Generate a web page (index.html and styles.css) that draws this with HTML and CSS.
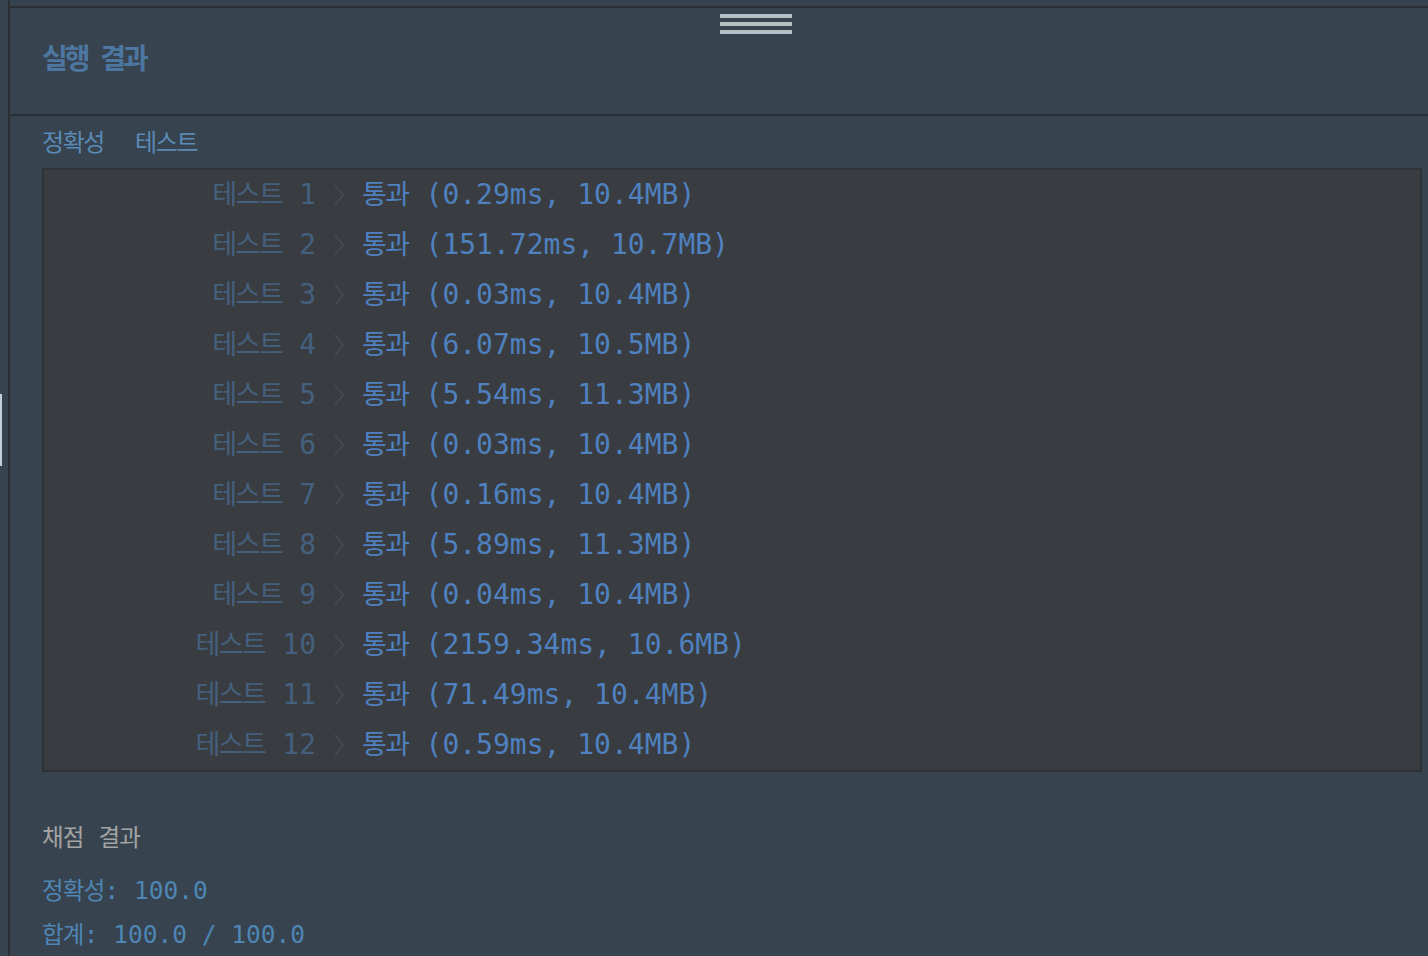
FILE: index.html
```html
<!DOCTYPE html>
<html lang="ko">
<head>
<meta charset="utf-8">
<title>실행 결과</title>
<link rel="stylesheet" href="styles.css">
</head>
<body>
<div class="app">
  <div class="rail"><div class="rail-grip"></div></div>
  <div class="vline"></div>
  <main class="main">
    <div class="topbar"></div>
    <div class="handle"><span></span><span></span><span></span></div>
    <header class="header"><h1 class="title">실행 결과</h1></header>
    <nav class="tabs"><span class="tab">정확성</span><span class="tab">테스트</span></nav>
    <section class="results">
      <div class="row"><div class="label"><span class="ko">테스트</span> 1</div><div class="chev"><svg width="12" height="22" viewBox="0 0 12 22"><polyline points="2,1 10,11 2,21" fill="none" stroke="#444c55" stroke-width="1.5"/></svg></div><div class="res"><span class="ko">통과</span> (0.29ms, 10.4MB)</div></div>
      <div class="row"><div class="label"><span class="ko">테스트</span> 2</div><div class="chev"><svg width="12" height="22" viewBox="0 0 12 22"><polyline points="2,1 10,11 2,21" fill="none" stroke="#444c55" stroke-width="1.5"/></svg></div><div class="res"><span class="ko">통과</span> (151.72ms, 10.7MB)</div></div>
      <div class="row"><div class="label"><span class="ko">테스트</span> 3</div><div class="chev"><svg width="12" height="22" viewBox="0 0 12 22"><polyline points="2,1 10,11 2,21" fill="none" stroke="#444c55" stroke-width="1.5"/></svg></div><div class="res"><span class="ko">통과</span> (0.03ms, 10.4MB)</div></div>
      <div class="row"><div class="label"><span class="ko">테스트</span> 4</div><div class="chev"><svg width="12" height="22" viewBox="0 0 12 22"><polyline points="2,1 10,11 2,21" fill="none" stroke="#444c55" stroke-width="1.5"/></svg></div><div class="res"><span class="ko">통과</span> (6.07ms, 10.5MB)</div></div>
      <div class="row"><div class="label"><span class="ko">테스트</span> 5</div><div class="chev"><svg width="12" height="22" viewBox="0 0 12 22"><polyline points="2,1 10,11 2,21" fill="none" stroke="#444c55" stroke-width="1.5"/></svg></div><div class="res"><span class="ko">통과</span> (5.54ms, 11.3MB)</div></div>
      <div class="row"><div class="label"><span class="ko">테스트</span> 6</div><div class="chev"><svg width="12" height="22" viewBox="0 0 12 22"><polyline points="2,1 10,11 2,21" fill="none" stroke="#444c55" stroke-width="1.5"/></svg></div><div class="res"><span class="ko">통과</span> (0.03ms, 10.4MB)</div></div>
      <div class="row"><div class="label"><span class="ko">테스트</span> 7</div><div class="chev"><svg width="12" height="22" viewBox="0 0 12 22"><polyline points="2,1 10,11 2,21" fill="none" stroke="#444c55" stroke-width="1.5"/></svg></div><div class="res"><span class="ko">통과</span> (0.16ms, 10.4MB)</div></div>
      <div class="row"><div class="label"><span class="ko">테스트</span> 8</div><div class="chev"><svg width="12" height="22" viewBox="0 0 12 22"><polyline points="2,1 10,11 2,21" fill="none" stroke="#444c55" stroke-width="1.5"/></svg></div><div class="res"><span class="ko">통과</span> (5.89ms, 11.3MB)</div></div>
      <div class="row"><div class="label"><span class="ko">테스트</span> 9</div><div class="chev"><svg width="12" height="22" viewBox="0 0 12 22"><polyline points="2,1 10,11 2,21" fill="none" stroke="#444c55" stroke-width="1.5"/></svg></div><div class="res"><span class="ko">통과</span> (0.04ms, 10.4MB)</div></div>
      <div class="row"><div class="label"><span class="ko">테스트</span> 10</div><div class="chev"><svg width="12" height="22" viewBox="0 0 12 22"><polyline points="2,1 10,11 2,21" fill="none" stroke="#444c55" stroke-width="1.5"/></svg></div><div class="res"><span class="ko">통과</span> (2159.34ms, 10.6MB)</div></div>
      <div class="row"><div class="label"><span class="ko">테스트</span> 11</div><div class="chev"><svg width="12" height="22" viewBox="0 0 12 22"><polyline points="2,1 10,11 2,21" fill="none" stroke="#444c55" stroke-width="1.5"/></svg></div><div class="res"><span class="ko">통과</span> (71.49ms, 10.4MB)</div></div>
      <div class="row"><div class="label"><span class="ko">테스트</span> 12</div><div class="chev"><svg width="12" height="22" viewBox="0 0 12 22"><polyline points="2,1 10,11 2,21" fill="none" stroke="#444c55" stroke-width="1.5"/></svg></div><div class="res"><span class="ko">통과</span> (0.59ms, 10.4MB)</div></div>
    </section>
    <section class="score">
      <div class="score-title"><span class="ko">채점</span> <span class="ko">결과</span></div>
      <div class="score-line first"><span class="ko">정확성</span>: 100.0</div>
      <div class="score-line"><span class="ko">합계</span>: 100.0 / 100.0</div>
    </section>
  </main>
</div>
</body>
</html>
```

FILE: styles.css
```css
html, body {
  margin: 0;
  padding: 0;
}
body {
  width: 1428px;
  height: 956px;
  overflow: hidden;
  background: #37434f;
  font-family: "DejaVu Sans Mono", "Noto Sans CJK KR", monospace;
}
.app {
  display: flex;
  height: 956px;
}
.rail {
  width: 8px;
  flex-shrink: 0;
  display: flex;
  flex-direction: column;
  padding-top: 394px;
  box-sizing: border-box;
}
.rail-grip {
  width: 2px;
  height: 72px;
  flex-shrink: 0;
  background: #c5cfd6;
}
.vline {
  width: 2px;
  flex-shrink: 0;
  background: #2c3035;
}
.main {
  flex: 1;
  position: relative;
  display: flex;
  flex-direction: column;
  padding-right: 6px;
  overflow: hidden;
}
.main > * {
  flex-shrink: 0;
}
.topbar {
  height: 6px;
  border-bottom: 2px solid #2c3035;
  margin-right: -6px;
}
.handle {
  position: absolute;
  left: 710px;
  top: 14px;
  display: flex;
  flex-direction: column;
  gap: 4px;
}
.handle span {
  display: block;
  width: 72px;
  height: 4px;
  background: #b4c0c6;
}
.header {
  height: 108px;
  box-sizing: border-box;
  padding: 0 0 8px 32px;
  display: flex;
  align-items: center;
  border-bottom: 2px solid #2c3035;
  margin-right: -6px;
}
.title {
  margin: 0;
  font-family: "Noto Sans CJK KR", sans-serif;
  font-weight: 700;
  font-size: 28px;
  line-height: 36px;
  letter-spacing: -3px;
  word-spacing: 8px;
  color: #4d77a0;
}
.tabs {
  height: 52px;
  box-sizing: border-box;
  padding: 0 0 3px 32px;
  display: flex;
  align-items: center;
  gap: 31px;
}
.tab {
  font-family: "Noto Sans CJK KR", sans-serif;
  font-size: 24px;
  line-height: 30px;
  letter-spacing: -1.4px;
  color: #5a8ab6;
}
.results {
  margin-left: 32px;
  height: 604px;
  box-sizing: border-box;
  border: 2px solid #2f3236;
  background: #393d41;
}
.ko {
  font-family: "Noto Sans CJK KR", sans-serif;
}
.row {
  height: 50px;
  display: flex;
  align-items: center;
  font-size: 28px;
  line-height: 50px;
  white-space: pre;
}
.row .ko {
  font-size: 27px;
  line-height: 1;
  letter-spacing: -1.5px;
}
.label {
  width: 272px;
  text-align: right;
  color: #45607e;
}
.chev {
  width: 46px;
  display: flex;
  justify-content: center;
  align-items: center;
  box-sizing: border-box;
}
.chev svg {
  display: block;
}
.res {
  color: #4f80bf;
}
.score {
  padding: 44px 0 0 32px;
  font-size: 24.5px;
}
.score .ko {
  font-size: 23.5px;
  line-height: 1;
  letter-spacing: -0.8px;
}
.score-title {
  line-height: 44px;
  white-space: pre;
  color: #a4a4a4;
}
.score-line {
  line-height: 44px;
  white-space: pre;
  color: #4e86b4;
}
.score-line.first {
  margin-top: 9px;
}
```
